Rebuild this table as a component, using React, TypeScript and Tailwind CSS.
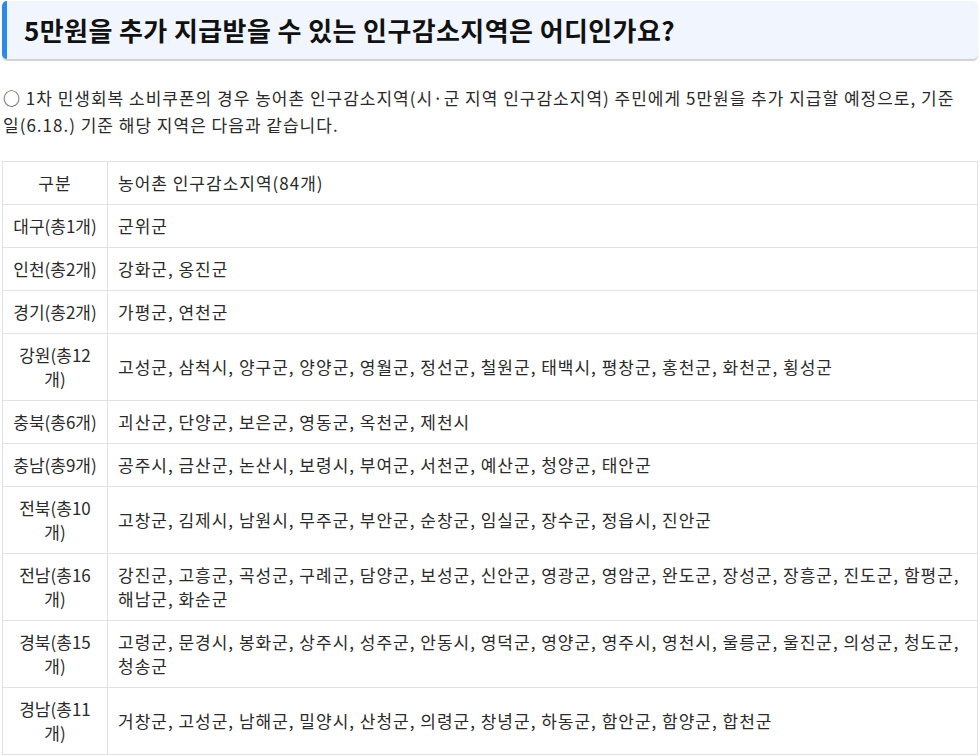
import React from 'react';

const rows: [React.ReactNode, string][] = [
  ['대구(총1개)', '군위군'],
  ['인천(총2개)', '강화군, 옹진군'],
  ['경기(총2개)', '가평군, 연천군'],
  [<>강원(총12<br />개)</>, '고성군, 삼척시, 양구군, 양양군, 영월군, 정선군, 철원군, 태백시, 평창군, 홍천군, 화천군, 횡성군'],
  ['충북(총6개)', '괴산군, 단양군, 보은군, 영동군, 옥천군, 제천시'],
  ['충남(총9개)', '공주시, 금산군, 논산시, 보령시, 부여군, 서천군, 예산군, 청양군, 태안군'],
  [<>전북(총10<br />개)</>, '고창군, 김제시, 남원시, 무주군, 부안군, 순창군, 임실군, 장수군, 정읍시, 진안군'],
  [<>전남(총16<br />개)</>, '강진군, 고흥군, 곡성군, 구례군, 담양군, 보성군, 신안군, 영광군, 영암군, 완도군, 장성군, 장흥군, 진도군, 함평군, 해남군, 화순군'],
  [<>경북(총15<br />개)</>, '고령군, 문경시, 봉화군, 상주시, 성주군, 안동시, 영덕군, 영양군, 영주시, 영천시, 울릉군, 울진군, 의성군, 청도군, 청송군'],
  [<>경남(총11<br />개)</>, '거창군, 고성군, 남해군, 밀양시, 산청군, 의령군, 창녕군, 하동군, 함안군, 함양군, 합천군'],
];

const cell = 'border border-[#e2e2e2] px-[10px] py-[9px] align-middle';

export default function App() {
  return (
    <div
      className="px-[2px] pt-px bg-white text-[#2a2a2a] min-h-screen"
      style={{ fontFamily: '"Noto Sans CJK KR", "Noto Sans", sans-serif' }}
    >
      <div className="h-[58px] flex items-center pl-[17px] bg-[#f1f6fe] border-l-[5px] border-[#2b8be6] rounded-[5px] shadow-[0_2px_1px_rgba(0,0,0,0.18)]">
        <h2 className="text-[26px] font-bold text-[#111] tracking-[0.4px] leading-none">
          5만원을 추가 지급받을 수 있는 인구감소지역은 어디인가요?
        </h2>
      </div>

      <p className="mt-[25px] pl-px text-[17px] leading-[27px] tracking-[1px]">
        ○ 1차 민생회복 소비쿠폰의 경우 농어촌 인구감소지역(시·군 지역 인구감소지역) 주민에게 5만원을 추가 지급할 예정으로, 기준
        <br />
        일(6.18.) 기준 해당 지역은 다음과 같습니다.
      </p>

      <table className="mt-[23px] w-[976px] table-fixed border-collapse text-[17px] leading-6 tracking-[1px]">
        <colgroup>
          <col className="w-[105px]" />
          <col />
        </colgroup>
        <tbody>
          <tr>
            <td className={`${cell} text-center`}>구분</td>
            <td className={cell}>농어촌 인구감소지역(84개)</td>
          </tr>
          {rows.map(([area, list], i) => (
            <tr key={i}>
              <td className={`${cell} text-center whitespace-nowrap tracking-normal px-[4px]`}>{area}</td>
              <td className={cell}>{list}</td>
            </tr>
          ))}
        </tbody>
      </table>
    </div>
  );
}
